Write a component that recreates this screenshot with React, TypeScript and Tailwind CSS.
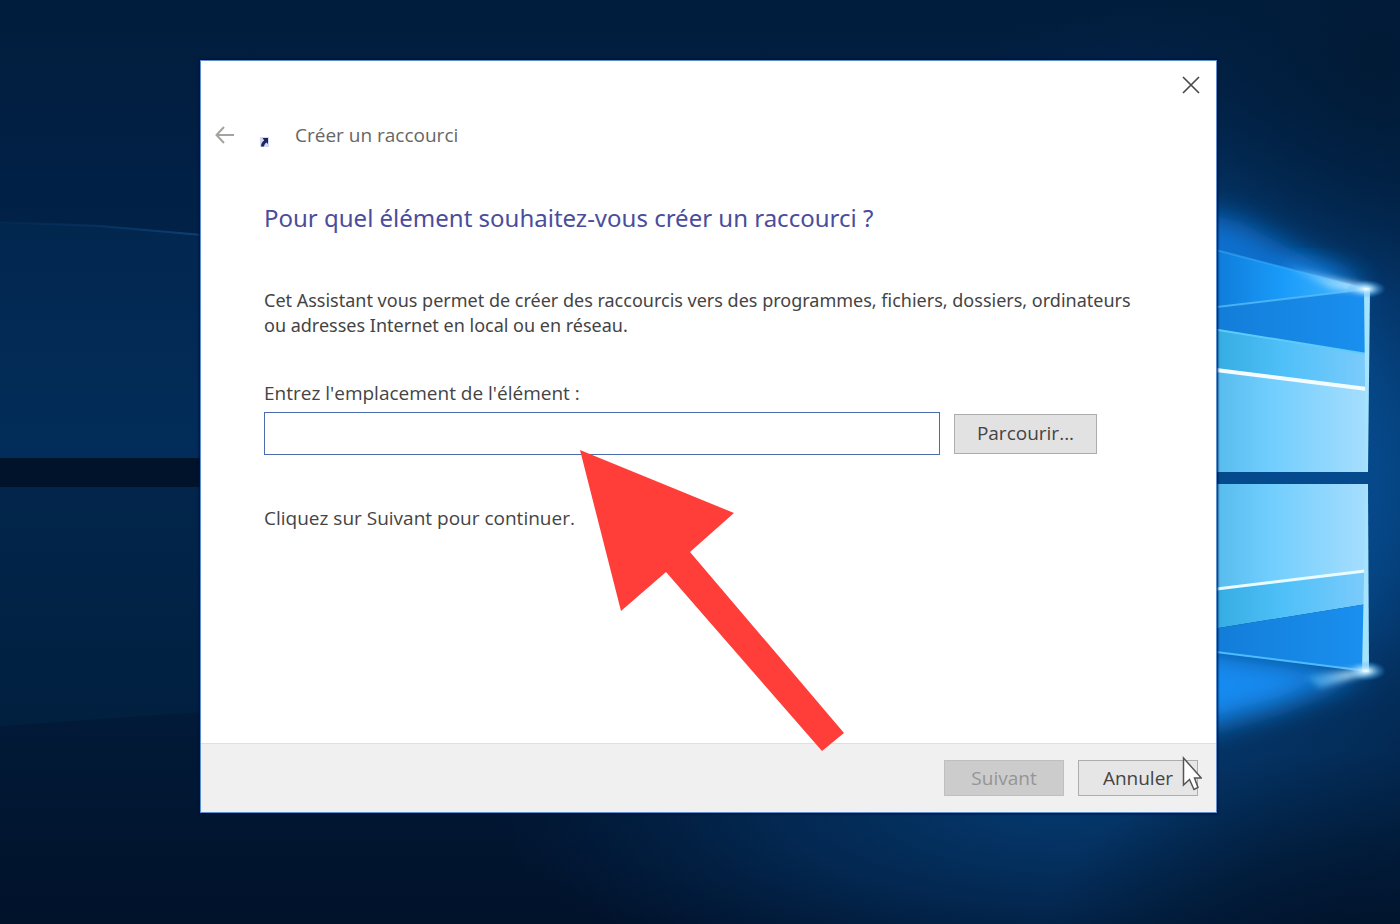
import { useState } from "react";

const Wallpaper = () => (
  <svg
    className="absolute inset-0 h-full w-full"
    viewBox="0 0 1400 924"
    preserveAspectRatio="xMaxYMid slice"
    aria-hidden="true"
  >
    <defs>
      <linearGradient id="night" x1="0" y1="0" x2="0" y2="1">
        <stop offset="0" stopColor="#011d3d" />
        <stop offset="0.3" stopColor="#02224a" />
        <stop offset="0.5" stopColor="#012650" />
        <stop offset="0.78" stopColor="#011a37" />
        <stop offset="1" stopColor="#01122b" />
      </linearGradient>
      <linearGradient id="beamTop" x1="0" y1="0" x2="0" y2="1">
        <stop offset="0" stopColor="#02274f" />
        <stop offset="1" stopColor="#022d5a" />
      </linearGradient>
      <linearGradient id="beamBottom" x1="0" y1="0" x2="0" y2="1">
        <stop offset="0" stopColor="#02254b" />
        <stop offset="1" stopColor="#012040" />
      </linearGradient>
      <linearGradient id="beamEdge" x1="0" y1="0" x2="1" y2="0">
        <stop offset="0" stopColor="#0c4076" stopOpacity="0.1" />
        <stop offset="1" stopColor="#0f4a82" />
      </linearGradient>
      <radialGradient id="halo" gradientUnits="userSpaceOnUse" cx="1180" cy="480" r="480">
        <stop offset="0" stopColor="#0a62b8" />
        <stop offset="0.45" stopColor="#064b8e" stopOpacity="0.85" />
        <stop offset="1" stopColor="#02254c" stopOpacity="0" />
      </radialGradient>
      <radialGradient id="floor" gradientUnits="userSpaceOnUse" cx="0" cy="0" r="1" gradientTransform="translate(1050 800) scale(560 210)">
        <stop offset="0" stopColor="#053a70" stopOpacity="0.95" />
        <stop offset="0.5" stopColor="#04305f" stopOpacity="0.7" />
        <stop offset="1" stopColor="#022650" stopOpacity="0" />
      </radialGradient>
      <radialGradient id="darkTop" gradientUnits="userSpaceOnUse" cx="0" cy="0" r="1" gradientTransform="translate(1380 60) scale(240 240)">
        <stop offset="0" stopColor="#011a35" stopOpacity="0.9" />
        <stop offset="0.5" stopColor="#011d3b" stopOpacity="0.6" />
        <stop offset="1" stopColor="#011d3b" stopOpacity="0" />
      </radialGradient>
      <radialGradient id="darkBottom" gradientUnits="userSpaceOnUse" cx="0" cy="0" r="1" gradientTransform="translate(1340 960) scale(300 210)">
        <stop offset="0" stopColor="#01122b" stopOpacity="0.95" />
        <stop offset="0.5" stopColor="#01162f" stopOpacity="0.65" />
        <stop offset="1" stopColor="#01162f" stopOpacity="0" />
      </radialGradient>
      <linearGradient id="pane" x1="0" y1="0" x2="1" y2="0">
        <stop offset="0" stopColor="#4fb6e8" />
        <stop offset="0.4" stopColor="#6fcdfd" />
        <stop offset="1" stopColor="#a6defd" />
      </linearGradient>
      <linearGradient id="band" x1="0" y1="0" x2="1" y2="0">
        <stop offset="0" stopColor="#2ea8dd" />
        <stop offset="0.5" stopColor="#4fc0f8" />
        <stop offset="1" stopColor="#7ccbfb" />
      </linearGradient>
      <linearGradient id="wing" x1="0" y1="0" x2="1" y2="0">
        <stop offset="0" stopColor="#0c74d2" />
        <stop offset="0.5" stopColor="#1a9cfa" />
        <stop offset="1" stopColor="#4dbcff" />
      </linearGradient>
      <linearGradient id="deep" x1="0" y1="0" x2="1" y2="0">
        <stop offset="0" stopColor="#127bd6" />
        <stop offset="1" stopColor="#1a90f0" />
      </linearGradient>
      <radialGradient id="spark">
        <stop offset="0" stopColor="#ffffff" />
        <stop offset="0.3" stopColor="#aee4ff" stopOpacity="0.8" />
        <stop offset="1" stopColor="#2b9df5" stopOpacity="0" />
      </radialGradient>
      <linearGradient id="flare" x1="0" y1="0" x2="1" y2="0">
        <stop offset="0" stopColor="#3fb4ff" stopOpacity="0.4" />
        <stop offset="1" stopColor="#f0fbff" />
      </linearGradient>
      <filter id="soft" x="-50%" y="-50%" width="200%" height="200%">
        <feGaussianBlur stdDeviation="14" />
      </filter>
      <filter id="fine" x="-50%" y="-50%" width="200%" height="200%">
        <feGaussianBlur stdDeviation="3" />
      </filter>
    </defs>

    <rect width="1400" height="924" fill="url(#night)" />
    <path d="M0 222 L100 226 L260 240 V462 H0 Z" fill="url(#beamTop)" />
    <path d="M0 222 L100 226 L260 240" fill="none" stroke="url(#beamEdge)" strokeWidth="2" />
    <rect y="458" width="260" height="29" fill="#01132b" />
    <path d="M0 487 H260 V708 L0 726 Z" fill="url(#beamBottom)" />

    <rect width="1400" height="924" fill="url(#halo)" />
    <rect width="1400" height="924" fill="url(#floor)" />
    <rect width="1400" height="924" fill="url(#darkTop)" />
    <rect width="1400" height="924" fill="url(#darkBottom)" />

    {/* light spilling above and below the logo */}
    <path d="M1160 205 L1240 222 L1366 290 L1160 330 Z" fill="#0d6fce" filter="url(#soft)" />
    <path d="M1290 262 L1340 274 L1366 290 L1280 290 Z" fill="#1d92f5" opacity="0.8" filter="url(#soft)" />
    <path d="M1160 640 L1366 672 L1275 708 L1160 740 Z" fill="#128af0" filter="url(#soft)" />

    <path d="M1200 246 L1368 289 L1200 310 Z" fill="url(#wing)" />
    <path d="M1200 310 L1368 289 V354 L1200 327 Z" fill="url(#deep)" />
    <path d="M1200 327 L1367 354 V389 L1200 367 Z" fill="url(#band)" />
    <path d="M1200 367 L1367 389 V472 H1200 Z" fill="url(#pane)" />
    <path d="M1200 246 L1368 289" stroke="#4dbcff" strokeWidth="2" opacity="0.4" />
    <path d="M1200 309 L1368 289" stroke="#55bdfb" strokeWidth="2" opacity="0.8" />
    <path d="M1200 327 L1367 354" stroke="#5fcbfa" strokeWidth="2" />
    <path d="M1200 368 L1367 389" stroke="#f4fcff" strokeWidth="4" />
    <path d="M1364 288 H1370 L1368 472 H1366 Z" fill="#a5e4ff" />

    <rect x="1200" y="472" width="168" height="12" fill="#054a8d" />

    <path d="M1200 484 H1367 V571 L1200 591 Z" fill="url(#pane)" />
    <path d="M1200 591 L1367 571 V604 L1200 631 Z" fill="url(#band)" />
    <path d="M1200 631 L1367 604 V671 L1200 650 Z" fill="url(#deep)" />
    <path d="M1200 591 L1365 571" stroke="#e9fbff" strokeWidth="3" />
    <path d="M1200 650 L1367 671" stroke="#4dbcff" strokeWidth="2" />
    <path d="M1366 484 H1368 L1369 672 H1362 Z" fill="#a5e4ff" />

    <path d="M1285 266 L1370 287 L1368 292 L1330 288 Z" fill="url(#flare)" filter="url(#fine)" />
    <path d="M1305 676 L1368 668 L1366 674 L1320 688 Z" fill="url(#flare)" filter="url(#fine)" />
    <ellipse cx="1366" cy="289" rx="20" ry="9" fill="url(#spark)" />
    <ellipse cx="1366" cy="671" rx="20" ry="10" fill="url(#spark)" />
  </svg>
);

const BackIcon = () => (
  <svg className="h-5 w-5" viewBox="0 0 20 20" fill="none" stroke="#a5a39f" strokeWidth="2" aria-hidden="true">
    <path d="M19 9 H1.5 M9 1 L1.5 9 L9 17" />
  </svg>
);

const ShortcutIcon = () => (
  <svg className="h-3 w-3" viewBox="0 0 12 12" aria-hidden="true">
    <rect x="1" y="1" width="9" height="10" fill="#d5daf0" />
    <path d="M3.500 2 H9 V8 L7.500 6.500 C6 7.500 5.300 8.500 5 10.500 H2 C2 7.500 3.500 6 5.200 4.300 Z" fill="#1d2560" />
  </svg>
);

const CloseIcon = () => (
  <svg className="h-5 w-5" viewBox="0 0 20 20" fill="none" stroke="#4a4a4a" strokeWidth="1.7" aria-hidden="true">
    <path d="M3 2 L19 18 M19 2 L3 18" />
  </svg>
);

const Pointer = () => (
  <svg className="pointer-events-none absolute right-3.5 bottom-5 h-9 w-5" viewBox="0 0 20 36" aria-hidden="true">
    <path
      d="M1.500 2 V29 L7.500 23.500 L12 33.500 L16 31.500 L12.500 22 H19.300 Z"
      fill="#fff"
      stroke="#555"
      strokeWidth="1.5"
    />
  </svg>
);

const RedArrow = () => (
  <svg
    className="pointer-events-none absolute top-[388px] left-[378px] h-[302px] w-[265px]"
    viewBox="579 449 265 302"
    aria-hidden="true"
  >
    <path d="M580 450 L734 513 L690 552 L844 733 L822 751 L666 572 L621 611 Z" fill="#ff3e3a" />
  </svg>
);

const App = () => {
  const [location, setLocation] = useState("");

  return (
    <main className="relative flex min-h-screen overflow-hidden bg-[#011d3d] pt-15 pr-[183px] pb-[111px] pl-50 font-['Open_Sans','Noto_Sans',sans-serif] text-[19px] leading-[25px] text-[#444444]">
      <Wallpaper />

      <section className="relative flex flex-1 flex-col border border-[#5b8fd0] bg-white shadow-[0_0_2px_1px_#01103a]">
        <div className="flex justify-end px-4 pt-3.5">
          <button type="button" aria-label="Fermer">
            <CloseIcon />
          </button>
        </div>

        <header className="flex items-center px-3.5 pt-7">
          <button type="button" aria-label="Précédent" className="mr-6">
            <BackIcon />
          </button>
          <span className="mr-6 pt-3">
            <ShortcutIcon />
          </span>
          <span className="text-[#666666]">Créer un raccourci</span>
        </header>

        <form
          className="flex flex-1 flex-col"
          onSubmit={(e) => e.preventDefault()}
        >
          <div className="flex-1 pt-[54px] pr-10 pl-[63px]">
            <h1 className="font-['Noto_Sans','Open_Sans',sans-serif] text-2xl leading-8 text-[#4a4d9c]">
              Pour quel élément souhaitez-vous créer un raccourci ?
            </h1>
            <p className="mt-[54px] font-['Noto_Sans','Open_Sans',sans-serif] text-lg leading-[25px]">
              Cet Assistant vous permet de créer des raccourcis vers des
              programmes, fichiers, dossiers, ordinateurs
              <br />
              ou adresses Internet en local ou en réseau.
            </p>
            <label htmlFor="location" className="mt-[43px] block">
              Entrez l'emplacement de l'élément :
            </label>
            <div className="mt-1.5 flex items-center gap-3.5 pr-[79px]">
              <input
                id="location"
                type="text"
                value={location}
                onChange={(e) => setLocation(e.target.value)}
                className="h-[43px] min-w-0 flex-1 border border-[#4a6cab] bg-white px-2 outline-none"
              />
              <button
                type="button"
                className="h-10 w-[143px] border border-[#adadad] bg-[#e2e2e2]"
              >
                Parcourir...
              </button>
            </div>
            <p className="mt-[51px]">Cliquez sur Suivant pour continuer.</p>
          </div>

          <footer className="flex justify-end gap-3.5 border-t border-[#dfdfdf] bg-[#f0f0f0] px-[18px] py-4">
            <button
              type="submit"
              disabled={location === ""}
              className="h-9 w-30 border border-[#bfbfbf] bg-[#cccccc] text-[#959595]"
            >
              Suivant
            </button>
            <button
              type="button"
              className="h-9 w-30 border border-[#adadad] bg-[#e6e6e6]"
            >
              Annuler
            </button>
          </footer>
        </form>

        <RedArrow />
        <Pointer />
      </section>
    </main>
  );
};

export default App;
